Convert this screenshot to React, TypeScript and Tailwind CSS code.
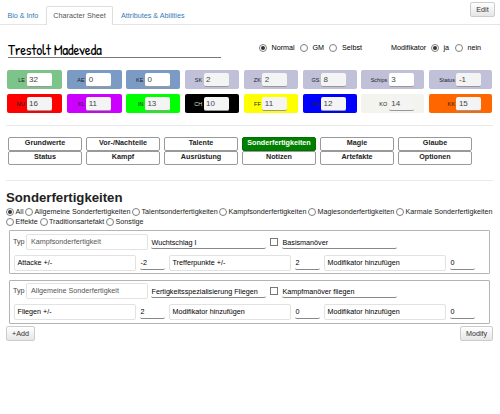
import type { ReactNode } from "react";

function Radio({ on = false }: { on?: boolean }) {
  return (
    <span className="flex size-[8px] shrink-0 items-center justify-center rounded-full border border-[#808080] bg-white">
      {on && <span className="size-[4px] rounded-full bg-[#333]" />}
    </span>
  );
}

const tiles = [
  [
    { label: "LE", value: "32", tile: "w-[55px] bg-[#7dc48a]", input: "bg-white" },
    { label: "AE", value: "0", tile: "w-[55px] bg-[#7b9bc5]", input: "bg-white" },
    { label: "KE", value: "0", tile: "w-[54px] bg-[#7b9bc5]", input: "bg-white" },
    { label: "SK", value: "2", tile: "w-[54px] bg-[#c0c0d8]", input: "bg-[#f4f4f4]" },
    { label: "ZK", value: "2", tile: "w-[54px] bg-[#c0c0d8]", input: "bg-[#f4f4f4]" },
    { label: "GS", value: "8", tile: "w-[54px] bg-[#c0c0d8]", input: "bg-[#f4f4f4]" },
    { label: "Schips", value: "3", tile: "w-[63px] bg-[#c0c0d8]", input: "bg-white" },
    { label: "Status", value: "-1", tile: "w-[63px] bg-[#c0c0d8]", input: "bg-[#f4f4f4]" },
  ],
  [
    { label: "MU", value: "16", tile: "w-[55px] bg-[#ff0000]", input: "bg-[#f4f4f4]" },
    { label: "KL", value: "11", tile: "w-[55px] bg-[#cc00ff]", input: "bg-[#f4f4f4]" },
    { label: "IN", value: "13", tile: "w-[54px] bg-[#00ff00]", input: "bg-[#f4f4f4]" },
    { label: "CH", value: "10", tile: "w-[54px] bg-black text-[#ddd]", input: "bg-[#f4f4f4]" },
    { label: "FF", value: "11", tile: "w-[54px] bg-[#ffff00]", input: "bg-[#f4f4f4]" },
    { label: "GE", value: "12", tile: "w-[54px] bg-[#0000ff]", input: "bg-[#f4f4f4]" },
    { label: "KO", value: "14", tile: "w-[63px] bg-[#f4f4ee]", input: "bg-[#f4f4f4]" },
    { label: "KK", value: "15", tile: "w-[63px] bg-[#ff6600]", input: "bg-[#f4f4f4]" },
  ],
];

const sections = [
  "Grundwerte", "Vor-/Nachteile", "Talente", "Sonderfertigkeiten", "Magie", "Glaube",
  "Status", "Kampf", "Ausrüstung", "Notizen", "Artefakte", "Optionen",
];

const filters = [
  [
    { text: "All", w: "w-[19px]" },
    { text: "Allgemeine Sonderfertigkeiten", w: "w-[107px]" },
    { text: "Talentsonderfertigkeiten", w: "w-[87px]" },
    { text: "Kampfsonderfertigkeiten", w: "w-[89px]" },
    { text: "Magiesonderfertigkeiten", w: "w-[88px]" },
    { text: "Karmale Sonderfertigkeiten", w: "w-[98px]" },
  ],
  [
    { text: "Effekte", w: "w-[33.5px]" },
    { text: "Traditionsartefakt", w: "w-[66.5px]" },
    { text: "Sonstige", w: "w-[50px]" },
  ],
];

function Modifier({ text, value, first = false }: { text: string; value: string; first?: boolean }) {
  return (
    <>
      <div className={`${first ? "" : "ml-[4px]"} flex h-[16px] w-[122px] items-center rounded-[2px] border border-[#e2e2e2] pl-[2.5px]`}>
        {text}
      </div>
      <div className="ml-[4px] h-[15px] w-[25px] rounded-[2px] border-b border-[#888] pt-[2.5px] pl-[0.5px] leading-[10px]">
        {value}
      </div>
    </>
  );
}

function Card({ type, name, rule, mods, className }: { type: string; name: string; rule: string; mods: [string, string][]; className: string }) {
  return (
    <section className={`h-[44px] w-[481px] rounded-[1px] border border-[#b4b4b4] text-black ${className}`}>
      <div className="flex h-[17px] items-center">
        <span className="ml-[3px] w-[13px] text-[#444]">Typ</span>
        <div className="flex h-[16px] w-[122px] items-center rounded-[2px] border border-[#e2e2e2] pl-[4px] text-[#555]">{type}</div>
        <div className="mt-[1px] ml-[3px] h-[14px] w-[115px] rounded-[2px] border-b border-[#888] pt-[3px] pl-[0.5px] leading-[10px] whitespace-nowrap">{name}</div>
        <span className="ml-[4px] size-[8px] border border-[#777]" />
        <div className="mt-[1px] ml-[4px] h-[14px] w-[115px] rounded-[2px] border-b border-[#888] pt-[3px] pl-[0.5px] leading-[10px]">{rule}</div>
      </div>
      <div className="mt-[4px] ml-[4px] flex h-[17px] items-center">
        {mods.map(([text, value], i) => (
          <Modifier key={i} text={text} value={value} first={i === 0} />
        ))}
      </div>
    </section>
  );
}

function Button({ className, children }: { className: string; children: ReactNode }) {
  return (
    <button className={`flex h-[15px] items-center justify-center rounded-[2px] border border-[#ccc] bg-linear-to-b from-white to-[#e6e6e6] text-[#333] ${className}`}>
      {children}
    </button>
  );
}

export default function App() {
  return (
    <main className="h-[414px] w-[500px] overflow-hidden bg-white font-['Liberation_Sans',Arial,sans-serif] text-[7.2px] leading-[10px] text-[#222]">
      <header className="flex h-[25px] items-start border-b border-[#e4e4e4] text-[#337ab7]">
        <span className="mt-[11px] ml-[7.5px] w-[38.5px] tracking-[-0.05px]">Bio &amp; Info</span>
        <span className="mt-[6px] h-[19px] w-[67px] rounded-t-[2px] border border-b-0 border-[#ddd] bg-white pt-[4px] text-center text-[#555]">Character Sheet</span>
        <span className="mt-[11px] ml-[8px] grow">Attributes &amp; Abilities</span>
        <Button className="mt-[2px] mr-[5px] w-[25px]">Edit</Button>
      </header>
      <div className="flex h-[45px] items-start text-black">
        <div className="mt-[16px] ml-[8px] h-[17px] w-[213px] border-b border-[#777] font-['Patrick_Hand','Comic_Neue','Open_Sans',sans-serif] text-[15px] leading-[17px] font-medium tracking-[-0.3px]">Trestolt Madeveda</div>
        <div className="mt-[18px] ml-[38px] flex items-center">
          <Radio on />
          <span className="ml-[4.5px] w-[28.5px]">Normal</span>
          <Radio />
          <span className="ml-[4.5px] w-[16.5px]">GM</span>
          <Radio />
          <span className="ml-[5px] w-[49px]">Selbst</span>
          <span className="w-[40px]">Modifikator</span>
          <Radio on />
          <span className="ml-[4.5px] w-[11px]">ja</span>
          <Radio />
          <span className="ml-[5px]">nein</span>
        </div>
      </div>
      <div className="ml-[7px] flex w-[485px] flex-col gap-[5px]">
        {tiles.map((row, r) => (
          <div key={r} className="flex justify-between">
            {row.map((t) => (
              <div key={t.label} className={`flex h-[19px] items-center justify-end rounded-[2px] pr-[10.5px] ${t.tile}`}>
                <span className="mr-[1.5px] pt-px text-[5.5px]">{t.label}</span>
                <span className={`flex h-[14px] w-[25px] items-center rounded-[2px] border-b border-[#999] pt-[2px] pl-[2.5px] text-[8px] text-[#444] ${t.input}`}>{t.value}</span>
              </div>
            ))}
          </div>
        ))}
      </div>
      <hr className="mt-[12px] ml-[6px] w-[487px] border-[#eaeaea]" />
      <nav className="mt-[11px] ml-[8px] grid w-[464px] grid-cols-6 gap-x-[4px] text-center font-bold">
        {sections.map((s) => (
          <div key={s} className={`h-[14px] rounded-[2px] border leading-[10px] ${s === "Sonderfertigkeiten" ? "border-[#007000] bg-[#008000] text-white" : "border-[#999]"}`}>{s}</div>
        ))}
      </nav>
      <hr className="mt-[15px] ml-[6px] w-[487px] border-[#eaeaea]" />
      <h1 className="mt-[9px] ml-[6px] text-[13.2px] leading-[15px] font-bold">Sonderfertigkeiten</h1>
      <div className="mt-[2px] ml-[6px]">
        {filters.map((row, r) => (
          <div key={r} className="flex h-[10px] items-center">
            {row.map((f) => (
              <label key={f.text} className={`flex shrink-0 items-center gap-[1.5px] whitespace-nowrap ${f.w}`}>
                <Radio on={f.text === "All"} />
                {f.text}
              </label>
            ))}
          </div>
        ))}
      </div>
      <div className="mt-[3px] ml-[9px] flex flex-col gap-[6px]">
        <Card className="pt-[2px]" type="Kampfsonderfertigkeit" name="Wuchtschlag I" rule="Basismanöver" mods={[["Attacke +/-", "-2"], ["Trefferpunkte +/-", "2"], ["Modifikator hinzufügen", "0"]]} />
        <Card className="pt-[1px]" type="Allgemeine Sonderfertigkeit" name="Fertigkeitsspezialisierung Fliegen" rule="Kampfmanöver fliegen" mods={[["Fliegen +/-", "2"], ["Modifikator hinzufügen", "0"], ["Modifikator hinzufügen", "0"]]} />
      </div>
      <footer className="mt-[2px] ml-[6px] flex w-[487px] justify-between">
        <Button className="w-[29px]">+Add</Button>
        <Button className="w-[33px]">Modify</Button>
      </footer>
    </main>
  );
}
